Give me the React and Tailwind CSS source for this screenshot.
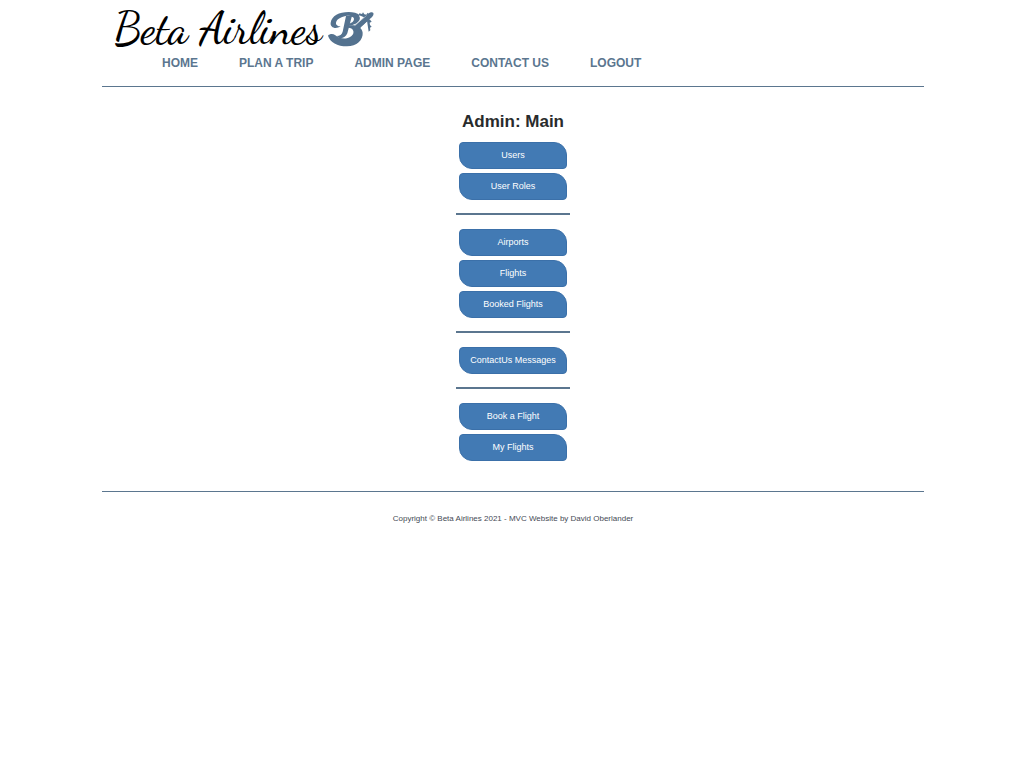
const navLinks = ["Home", "Plan a Trip", "Admin Page", "Contact Us", "Logout"];

const adminGroups = [
  ["Users", "User Roles"],
  ["Airports", "Flights", "Booked Flights"],
  ["ContactUs Messages"],
  ["Book a Flight", "My Flights"],
];

function BrandMark() {
  return (
    <svg viewBox="12 18 138 114" className="h-[38px] w-[46px] shrink-0 fill-[#54728f]" aria-hidden="true">
      {/* upper swoosh */}
      <path d="M50 67C34 77 18 70 20 56C23 36 45 24 74 24C88 24 100 27 107 34L99 42C88 35 76 34 65 36C50 39 38 46 36 56C35 62 41 67 50 67Z" />
      {/* stem and bowls */}
      <path d="M66 36L84 35L70 88C66 99 56 104 46 102L38 96C48 96 53 92 56 83Z" />
      <path d="M84 31C103 29 112 38 106 49C101 58 88 64 74 66L74 60C84 57 90 51 90 45C90 39 86 38 79 38Z" />
      {/* lower crescent */}
      <path d="M74 65C95 61 114 69 116 86C118 107 98 127 69 127C40 127 18 115 12 95C18 89 27 89 34 94C46 103 60 106 71 102C84 98 90 90 88 81C86 74 80 71 72 71Z" />
      {/* plane */}
      <path d="M88 77L93 63L132 29C138 24 146 23 148 27C150 31 147 37 142 41L106 74L95 78Z" />
      <path d="M92 65L133 29M106 76L142 43" className="fill-none stroke-white" strokeWidth="2" />
      <path d="M120 40L104 33L106 28L114 30L117 25L121 31L127 32L131 26L134 31Z" />
      <path d="M129 50L134 83L139 79L138 71L143 68L138 63L137 56L143 53L137 46Z" />
      <path d="M98 68L84 66L81 70L92 74ZM102 72L104 87L109 83L110 70Z" />
    </svg>
  );
}

export default function App() {
  return (
    <div className="min-h-screen bg-white pr-[100px] pl-[102px] font-['Liberation_Sans',Arial,sans-serif]">
      <header className="border-b border-[#5b768f] pt-2.5 pb-[15px]">
        <a href="#" className="flex h-[38px] items-center gap-1.5 pl-3 text-black">
          <span className="font-['Dancing_Script','Liberation_Serif',cursive] text-[44px] leading-10 font-medium whitespace-nowrap">
            Beta Airlines
          </span>
          <BrandMark />
        </a>
        <nav className="mt-[7px] flex flex-wrap gap-x-[41px] pl-[60px] text-xs leading-4 font-bold text-[#5b768f] uppercase">
          {navLinks.map((label) => (
            <a key={label} href="#">{label}</a>
          ))}
        </nav>
      </header>

      <main className="flex flex-col items-center border-b border-[#5b768f] pt-[25px] pb-[30px]">
        <h1 className="text-[17px] leading-5 font-bold text-[#292b2c]">Admin: Main</h1>
        <div className="mt-2.5 w-[114px]">
          {adminGroups.map((group, index) => (
            <div key={group[0]}>
              {index > 0 && <hr className="mt-[13px] mb-3.5 border-t-2 border-[#5b768f]" />}
              <div className="flex flex-col gap-1 px-[3px]">
                {group.map((label) => (
                  <button
                    key={label}
                    type="button"
                    className="h-[27px] rounded-tl-[4px] rounded-tr-[13px] rounded-br-[4px] rounded-bl-[13px] border border-[#3b70a9] bg-[#427ab4] pb-0.5 text-[9px] leading-3 whitespace-nowrap text-white"
                  >
                    {label}
                  </button>
                ))}
              </div>
            </div>
          ))}
        </div>
      </main>

      <footer className="pt-[21px] text-center text-[8px] leading-3 text-[#454b55]">
        Copyright © Beta Airlines 2021 - MVC Website by David Oberlander
      </footer>
    </div>
  );
}
